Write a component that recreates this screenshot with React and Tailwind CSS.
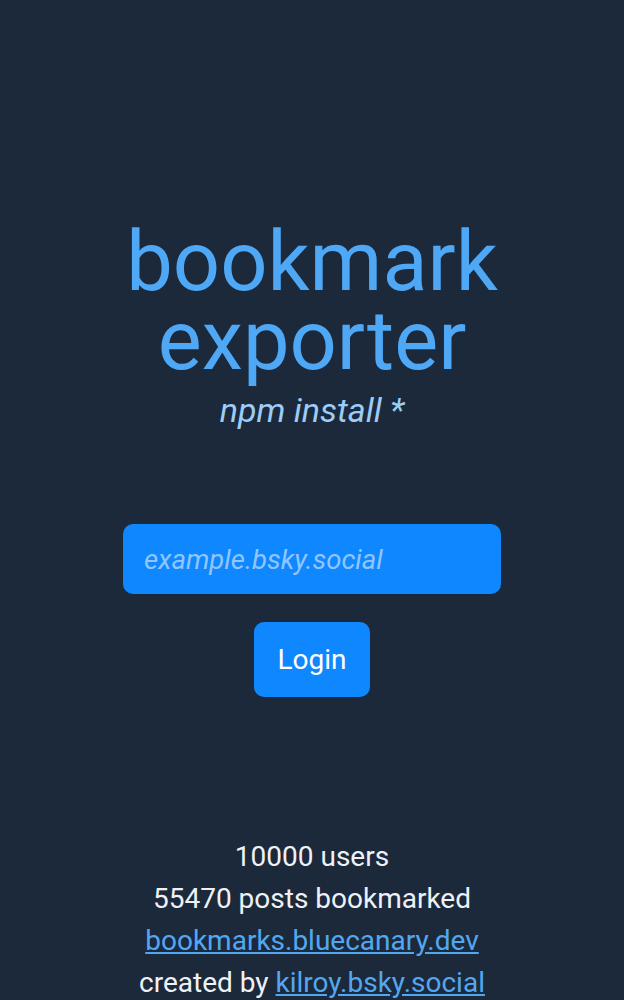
export default function App() {
  return (
    <div
      className="min-h-[1000px] bg-[#1c293b] flex flex-col items-center pt-[222px] text-center"
      style={{ fontFamily: 'Roboto, "Noto Sans", sans-serif' }}
    >
      <h1 className="text-[83px] leading-[79px] font-normal text-[#4ea8f5]">
        bookmark
        <br />
        exporter
      </h1>
      <p className="mt-[10px] text-[34px] leading-[40px] italic text-[#9ccdf6]">npm install *</p>

      <input
        type="text"
        placeholder="example.bsky.social"
        className="mt-[94px] w-[378px] h-[70px] rounded-[10px] bg-[#0f87ff] px-[21px] text-[27.5px] italic text-white placeholder:text-[#8fc6ff] outline-none"
      />

      <button className="mt-[28px] w-[116px] h-[75px] rounded-[10px] bg-[#0f87ff] text-[28px] text-white">
        Login
      </button>

      <div className="mt-[139px] text-[28px] leading-[42px] text-[#eef2f7]">
        <p>10000 users</p>
        <p>55470 posts bookmarked</p>
        <p>
          <a href="#" className="text-[#52a8f0] underline">bookmarks.bluecanary.dev</a>
        </p>
        <p>
          created by <a href="#" className="text-[#52a8f0] underline">kilroy.bsky.social</a>
        </p>
      </div>
    </div>
  )
}
